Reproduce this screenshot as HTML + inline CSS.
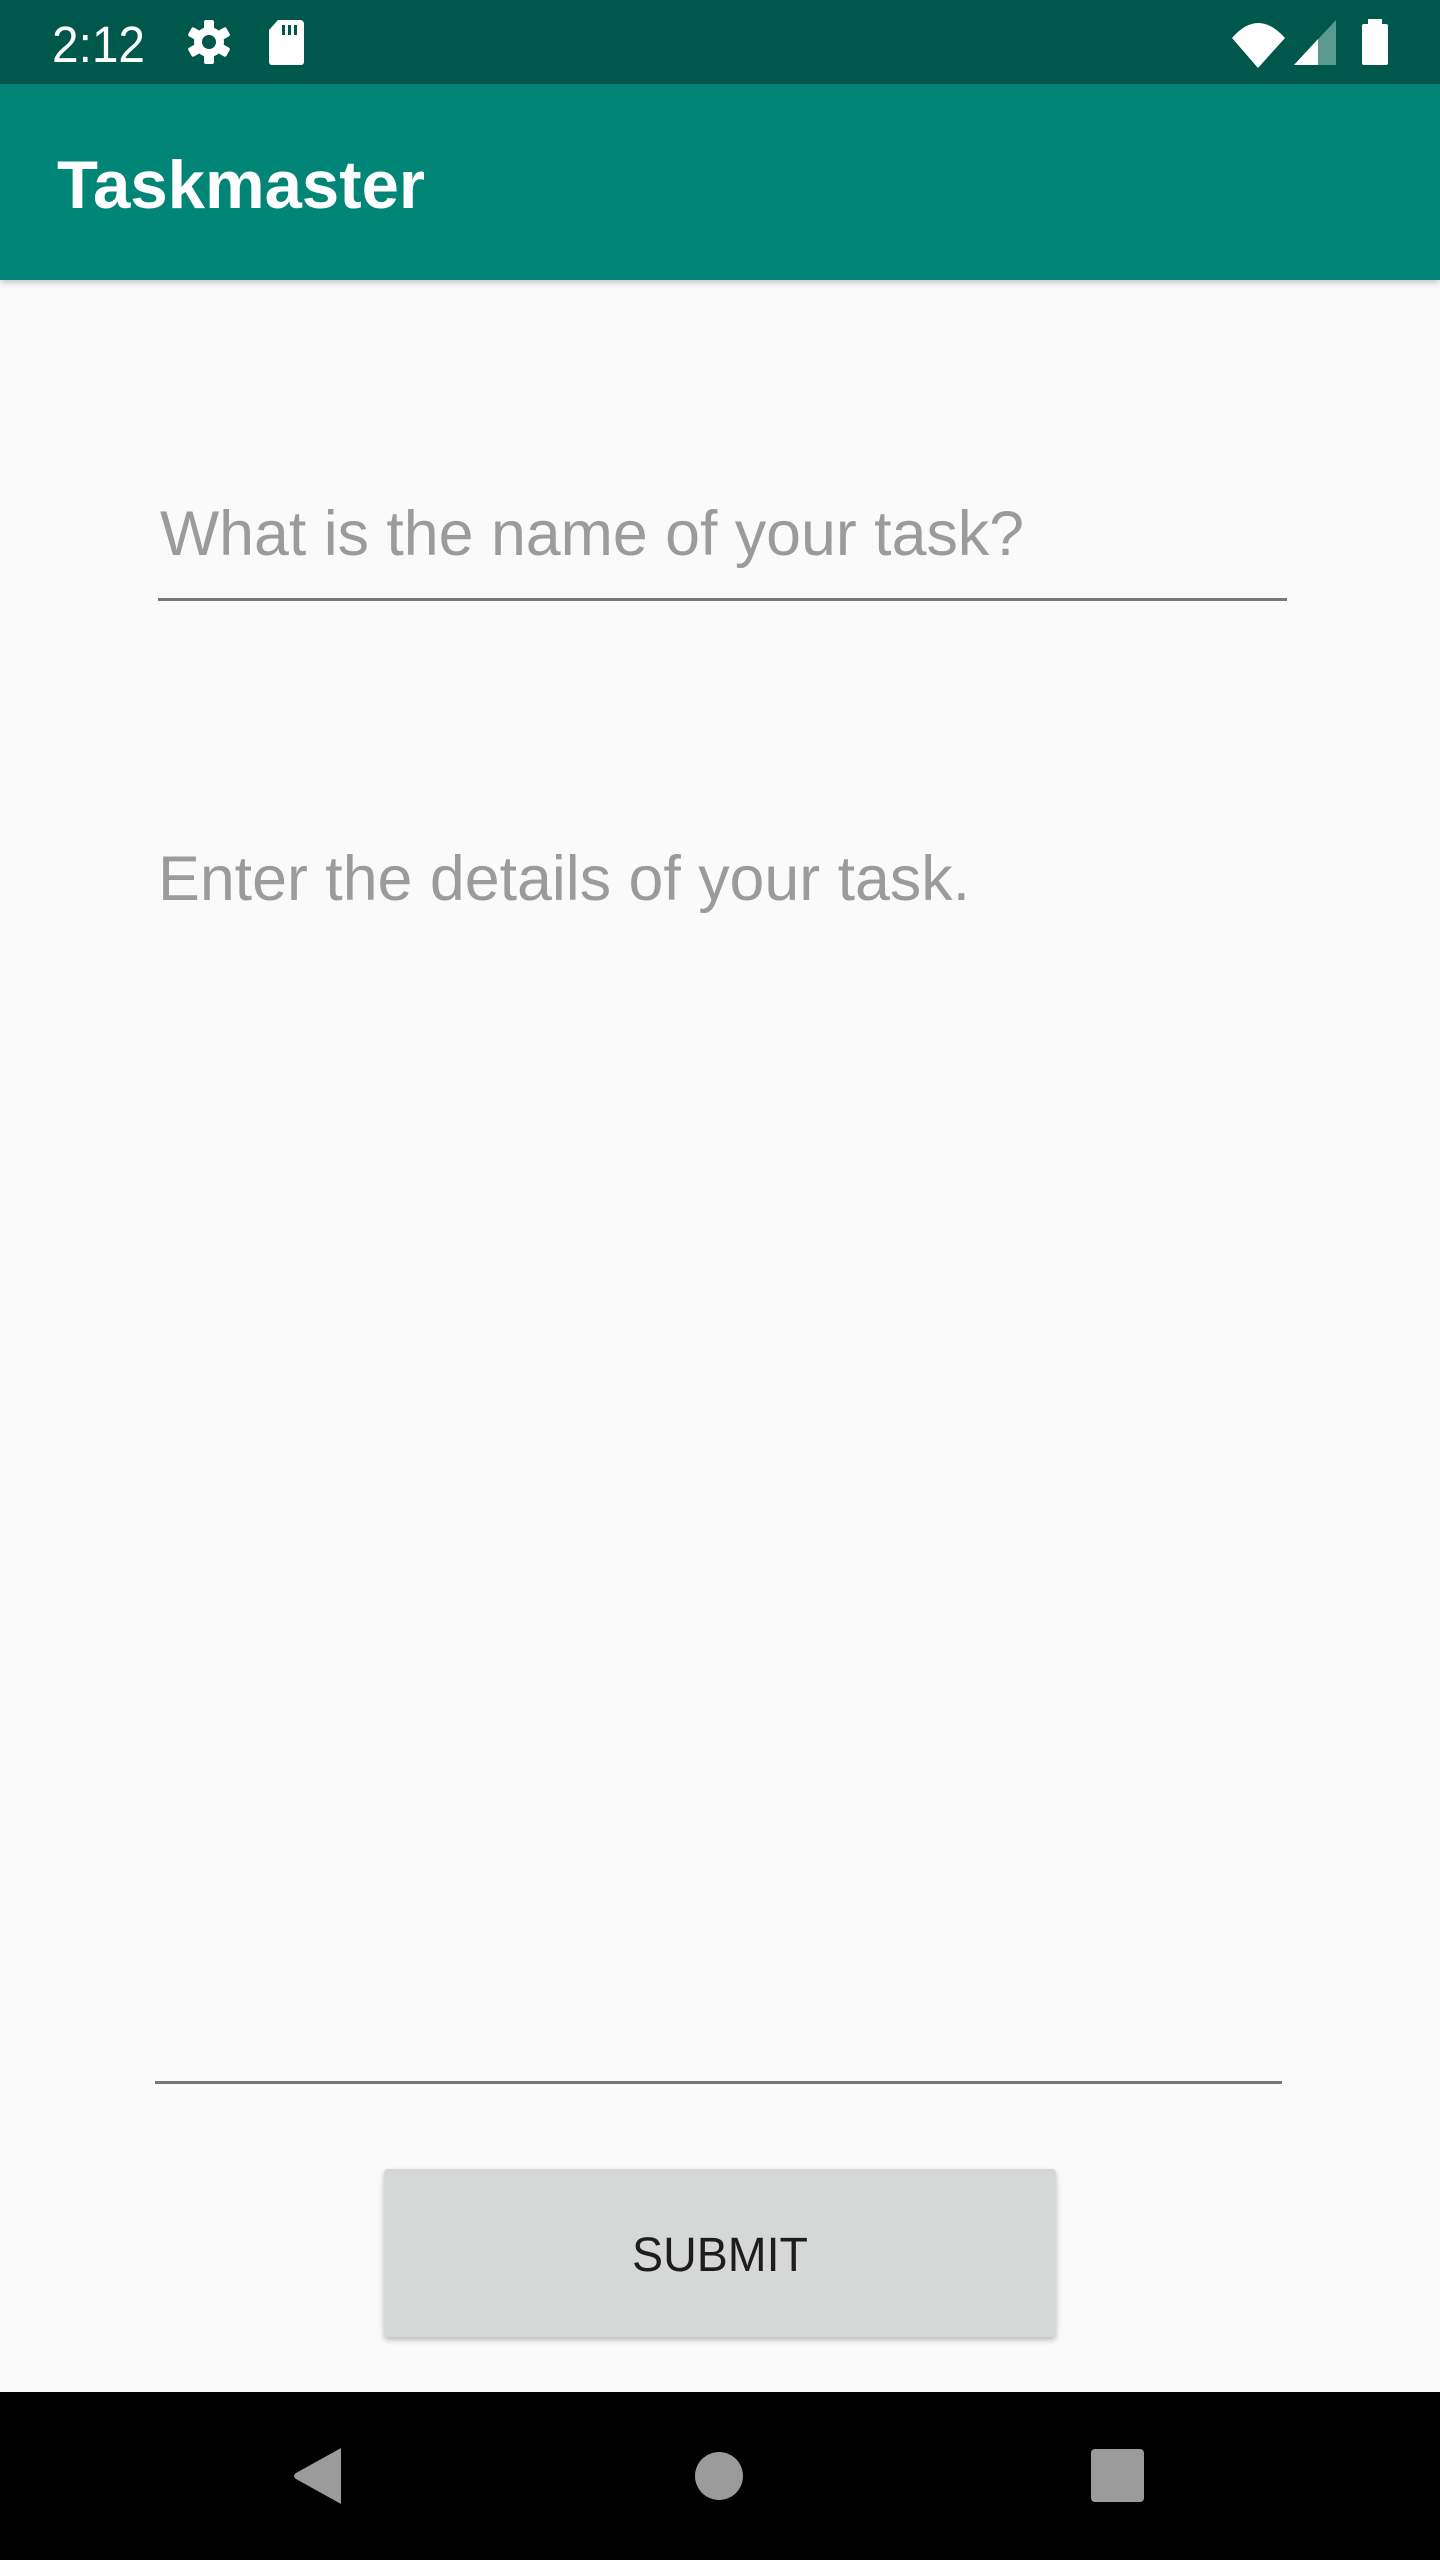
<!DOCTYPE html>
<html><head><meta charset="utf-8"><style>
html,body{margin:0;padding:0;width:1440px;height:2560px;overflow:hidden;background:#FAFAFA;font-family:"Liberation Sans",sans-serif}
.abs{position:absolute}
</style></head><body>
<div class="abs" style="left:0;top:0;width:1440px;height:84px;background:#00574B"></div>
<div class="abs" style="left:0;top:84px;width:1440px;height:196px;background:#008577;box-shadow:0 3px 6px rgba(0,0,0,0.2)"></div>
<div class="abs" style="left:0;top:2392px;width:1440px;height:168px;background:#000"></div>
<div class="abs" style="left:384px;top:2169px;width:672px;height:168px;background:#D6D7D7;border-radius:4px;box-shadow:0 3px 6px rgba(0,0,0,0.25)"></div>
<div class="abs" style="left:158px;top:598px;width:1129px;height:3px;background:#777"></div>
<div class="abs" style="left:155px;top:2081px;width:1127px;height:3px;background:#777"></div>
<svg class="abs" style="left:0;top:0" width="1440" height="2560">
<text x="52" y="62" font-size="51" fill="#fff" textLength="93" lengthAdjust="spacingAndGlyphs">2:12</text>
<text x="57" y="208" font-size="68" font-weight="bold" fill="#fff" textLength="368" lengthAdjust="spacingAndGlyphs">Taskmaster</text>
<text x="160" y="555" font-size="63" fill="#9B9B9B" textLength="864" lengthAdjust="spacingAndGlyphs">What is the name of your task?</text>
<text x="158" y="900" font-size="63" fill="#9B9B9B" textLength="812" lengthAdjust="spacingAndGlyphs">Enter the details of your task.</text>
<text x="632" y="2271" font-size="48" fill="#1d1d1d" textLength="176" lengthAdjust="spacingAndGlyphs">SUBMIT</text>
<!-- gear -->
<g transform="translate(209,42)" fill="#fff">
<circle r="15"/>
<g><rect x="-5" y="-22" width="10" height="44" rx="2"/><rect x="-5" y="-22" width="10" height="44" rx="2" transform="rotate(60)"/><rect x="-5" y="-22" width="10" height="44" rx="2" transform="rotate(120)"/></g>
<circle r="7" fill="#00574B"/>
</g>
<!-- sd card -->
<path d="M278 20 H300 a4 4 0 0 1 4 4 V62 a3 3 0 0 1 -3 3 H272 a3 3 0 0 1 -3 -3 V30 Z" fill="#fff"/>
<rect x="282" y="25" width="3" height="10" fill="#00574B"/><rect x="288" y="25" width="3" height="10" fill="#00574B"/><rect x="294" y="25" width="3" height="10" fill="#00574B"/>
<!-- wifi -->
<path d="M1232 38 Q1258 8 1285 38 L1258 68 Z" fill="#fff"/>
<!-- signal -->
<path d="M1294 65 L1336 20 V65 Z" fill="#5a9a8f"/>
<path d="M1294 65 L1318 39 V65 Z" fill="#fff"/>
<!-- battery -->
<rect x="1368" y="19" width="14" height="6" fill="#fff"/>
<rect x="1362" y="24" width="26" height="41" rx="2" fill="#fff"/>
<!-- nav -->
<path d="M341 2448 V2504 L296 2479 Q292 2476 296 2473 Z" fill="#9b9b9b"/>
<circle cx="719" cy="2476" r="24" fill="#9b9b9b"/>
<rect x="1091" y="2449" width="53" height="53" rx="4" fill="#9b9b9b"/>
</svg>
</body></html>
